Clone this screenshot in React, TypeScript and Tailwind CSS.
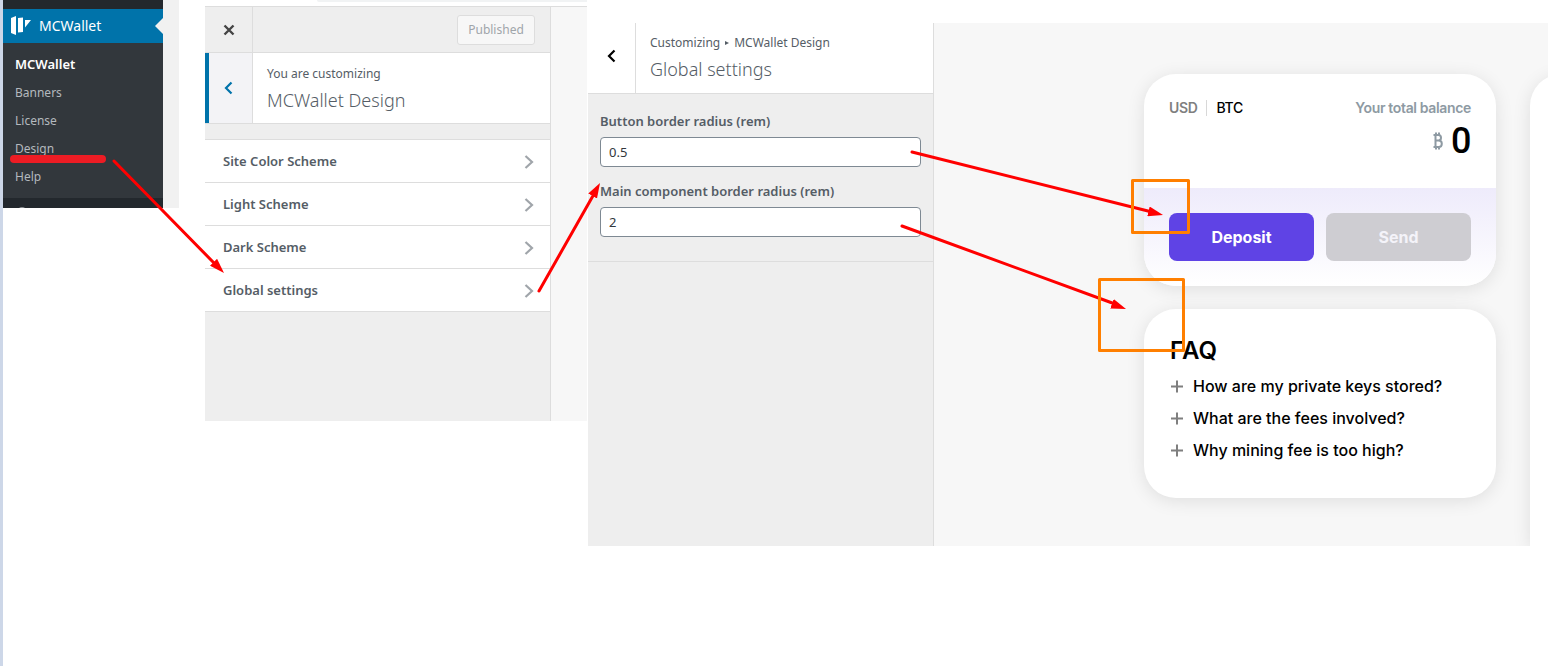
import React, { useState } from 'react';

const MENU_ITEMS = ['MCWallet', 'Banners', 'License', 'Design', 'Help'];
const SECTIONS = ['Site Color Scheme', 'Light Scheme', 'Dark Scheme', 'Global settings'];
const QUESTIONS = [
  'How are my private keys stored?',
  'What are the fees involved?',
  'Why mining fee is too high?',
];

const AdminMenu: React.FC = () => (
  <div className="flex h-52 w-44 shrink-0 bg-[#f1f1f1]">
    <nav className="flex w-40 flex-col overflow-hidden bg-[#23282d] pt-[9px]">
      <a href="#mcwallet" className="relative flex h-[34px] shrink-0 items-center bg-[#0073aa] pl-2 text-sm text-white">
        <svg width="20" height="20" viewBox="0 0 20 20" fill="#fff" className="mr-2">
          <path d="M0 2 L5 0 V19 L0 17Z M7 2 L12 1.5 V16 L7 16.5Z M14 4 H20 L14 11.5Z" />
        </svg>
        MCWallet
        <span className="absolute right-0 border-y-8 border-r-8 border-y-transparent border-r-[#f1f1f1]" />
      </a>
      <ul className="shrink-0 bg-[#32373c] pt-2 pb-[7px]">
        {MENU_ITEMS.map((item, i) => (
          <li key={item}>
            <a
              href={`#${item}`}
              className={`flex h-7 items-center pl-3 ${i === 0 ? 'text-[13px] font-semibold text-white' : 'text-xs text-[#b4b9be]'}`}
            >
              {item}
            </a>
          </li>
        ))}
      </ul>
      <span className="mt-[9px] ml-[15px] h-4 w-2 shrink-0 rounded-full bg-[#8d9195]" />
    </nav>
  </div>
);

const Chevron: React.FC<{ className?: string; left?: boolean }> = ({ className, left }) => (
  <svg width="10" height="14" viewBox="0 0 10 14" fill="none" stroke="currentColor" strokeWidth="2.2" className={className}>
    <path d={left ? 'M7.5 1.5 L2 7 L7.5 12.5' : 'M1.5 1 L8 7 L1.5 13'} />
  </svg>
);

const CustomizerPanel: React.FC = () => (
  <div className="flex w-[382px] shrink-0 flex-col">
    <div className="ml-28 h-[2px] rounded-bl-full bg-[#f1f3f4]" />
    <div className="mt-1 flex h-[415px] border-t border-[#ddd] bg-[#f7f7f7]">
      <div className="w-[346px] border-r border-[#ddd] bg-[#eee] text-[#555d66]">
        <div className="flex h-[46px] items-center border-b border-[#ddd]">
          <button aria-label="Close" className="flex h-full w-12 items-center justify-center border-r border-[#ddd] text-[#444]">
            <svg width="12" height="12" viewBox="0 0 12 12" stroke="currentColor" strokeWidth="2.4">
              <path d="M1.5 1.5 L10.5 10.5 M10.5 1.5 L1.5 10.5" />
            </svg>
          </button>
          <button className="mt-px mr-[15px] ml-auto h-[30px] w-[78px] rounded-[3px] border border-[#ddd] bg-[#f7f7f7] text-xs text-[#a0a5aa]">
            Published
          </button>
        </div>
        <div className="flex h-[71px] border-b border-[#ddd] bg-white">
          <button aria-label="Back" className="flex w-12 items-center justify-center border-r border-l-4 border-r-[#ddd] border-l-[#0073aa] bg-[#f3f3f6] pr-1 text-[#0073aa]">
            <Chevron left />
          </button>
          <div className="pt-[11px] pl-[14px]">
            <p className="text-xs leading-5">You are customizing</p>
            <h2 className="text-lg leading-8 font-light">MCWallet Design</h2>
          </div>
        </div>
        <ul className="mt-[15px] border-t border-[#ddd] bg-white">
          {SECTIONS.map((section) => (
            <li key={section} className="border-b border-[#ddd]">
              <button className="flex h-[42px] w-full items-center justify-between pt-px pr-4 pl-[18px] text-[13px] font-semibold">
                {section}
                <Chevron className="text-[#a0a5aa]" />
              </button>
            </li>
          ))}
        </ul>
      </div>
    </div>
  </div>
);

interface NumberFieldProps {
  id: string;
  label: string;
  initial: string;
}

const NumberField: React.FC<NumberFieldProps> = ({ id, label, initial }) => {
  const [value, setValue] = useState(initial);

  return (
    <div className="mb-3 flex flex-col">
      <label htmlFor={id} className="mb-1 text-[13px] leading-6 font-semibold">
        {label}
      </label>
      <input
        id={id}
        value={value}
        onChange={(e) => setValue(e.target.value)}
        className="h-[30px] rounded border border-[#7e8993] bg-white px-2 text-[13px] text-[#32373c]"
      />
    </div>
  );
};

const GlobalSettings: React.FC = () => (
  <div className="ml-px w-[346px] shrink-0 border-r border-[#ddd] bg-[#eee] text-[#555d66]">
    <div className="flex h-[71px] border-b border-[#ddd] bg-white">
      <button aria-label="Back" className="flex w-12 items-center justify-center border-r border-[#ddd] pb-1 text-black">
        <Chevron left />
      </button>
      <div className="pt-[10px] pl-[14px]">
        <p className="flex items-center text-xs leading-5">
          Customizing
          <span className="mx-[5px] border-y-2 border-l-4 border-y-transparent border-l-current" />
          MCWallet Design
        </p>
        <h2 className="text-lg leading-8 font-light">Global settings</h2>
      </div>
    </div>
    <div className="border-b border-[#ddd] px-3 pt-[15px] pb-3">
      <NumberField id="button-radius" label="Button border radius (rem)" initial="0.5" />
      <NumberField id="component-radius" label="Main component border radius (rem)" initial="2" />
    </div>
  </div>
);

const BalanceCard: React.FC = () => (
  <section className="overflow-hidden rounded-[32px] bg-white shadow-[0_3px_18px_rgba(0,0,0,0.1)]">
    <div className="flex h-[114px] justify-between px-[25px] pt-6 text-sm font-semibold tracking-tight">
      <div className="flex h-5 items-center">
        <button className="text-[#7f7f7f]">USD</button>
        <span className="mx-[9px] h-4 w-px bg-[#d8d8d8]" />
        <button className="font-medium text-black">BTC</button>
      </div>
      <div>
        <p className="leading-5 text-[#8e9aa3]">Your total balance</p>
        <p className="flex items-center justify-end gap-2 font-['Roboto',sans-serif] text-[36px] leading-[46px] font-medium text-black">
          <svg width="10" height="18" viewBox="0 0 10 18" fill="none" stroke="#8e9aa3" strokeWidth="2">
            <path d="M0.5 3 H5.5 Q8 3 8 5.8 Q8 8.6 5.5 8.6 H2.5 M5.5 8.6 Q8.8 8.6 8.8 11.8 Q8.8 15 5.8 15 H0.5 M2.5 3 V15 M3 0.5 V3 M6 0.5 V3 M3 15 V17.5 M6 15 V17.5" />
          </svg>
          0
        </p>
      </div>
    </div>
    <div className="flex gap-3 bg-linear-to-b from-[#eeebfb] to-white p-[25px] text-base font-bold">
      <button className="h-12 flex-1 rounded-lg bg-[#5f43e5] pb-px text-white">Deposit</button>
      <button className="h-12 flex-1 rounded-lg bg-[#cecdd2] pb-px text-[#f4f3f9]">Send</button>
    </div>
  </section>
);

const FaqCard: React.FC = () => (
  <section className="rounded-[32px] bg-white px-[26px] pt-[26px] pb-8 text-black shadow-[0_3px_18px_rgba(0,0,0,0.1)]">
    <h2 className="text-2xl font-semibold">FAQ</h2>
    <ul className="mt-[3px]">
      {QUESTIONS.map((question) => (
        <li key={question}>
          <button className="flex h-8 items-center gap-[10px] text-base font-medium whitespace-nowrap">
            <svg width="13" height="13" viewBox="0 0 13 13" stroke="#7f7f7f" strokeWidth="2">
              <path d="M1 6.5 H13 M7 0.5 V12.5" />
            </svg>
            {question}
          </button>
        </li>
      ))}
    </ul>
  </section>
);

const WalletPreview: React.FC = () => (
  <main className="flex flex-1 justify-end overflow-hidden bg-[#f7f7f7] font-['Inter',sans-serif]">
    <div className="mt-[51px] mr-[34px] flex w-[352px] shrink-0 flex-col gap-[23px]">
      <BalanceCard />
      <FaqCard />
    </div>
    <div className="mt-[51px] w-[18px] overflow-visible">
      <div className="h-full w-[352px] rounded-tl-[32px] bg-white shadow-[0_3px_18px_rgba(0,0,0,0.1)]" />
    </div>
  </main>
);

// Underline, arrows and highlight boxes drawn over the panels
const Annotations: React.FC = () => (
  <svg width="1548" height="666" viewBox="0 0 1548 666" fill="none" className="pointer-events-none absolute top-0 left-0">
    <defs>
      <marker id="head" markerWidth="16" markerHeight="10" refX="15" refY="5" orient="auto" markerUnits="userSpaceOnUse">
        <path d="M0 0 L15 5 L0 10Z" fill="#f00" />
      </marker>
    </defs>
    <path d="M14 159 H102" stroke="#ed1c24" strokeWidth="8" strokeLinecap="round" />
    <g stroke="#f00" strokeWidth="3" strokeLinecap="round">
      <path d="M114 161 L214 263" />
      <path d="M539 291 L594 194" />
      <path d="M912 152 L1152 212" />
      <path d="M902 226 L1115 304" />
    </g>
    <g markerEnd="url(#head)">
      <path d="M114 161 L224 273" />
      <path d="M539 291 L600 183" />
      <path d="M912 152 L1163 215" />
      <path d="M902 226 L1126 309" />
    </g>
    <g stroke="#ff7f00" strokeWidth="3" strokeLinejoin="round">
      <rect x="1132.5" y="180.5" width="56" height="52" />
      <rect x="1099.5" y="279.5" width="84" height="71" />
    </g>
  </svg>
);

export default function App() {
  return (
    <div className="relative flex min-h-screen items-start overflow-hidden bg-white font-['Noto_Sans',sans-serif]">
      <div className="w-[3px] shrink-0 self-stretch bg-[#cdd7e8]" />
      <AdminMenu />
      <div className="w-[26px] shrink-0" />
      <CustomizerPanel />
      <div className="mt-[23px] flex h-[523px] min-w-0 flex-1">
        <GlobalSettings />
        <WalletPreview />
      </div>
      <Annotations />
    </div>
  );
}
